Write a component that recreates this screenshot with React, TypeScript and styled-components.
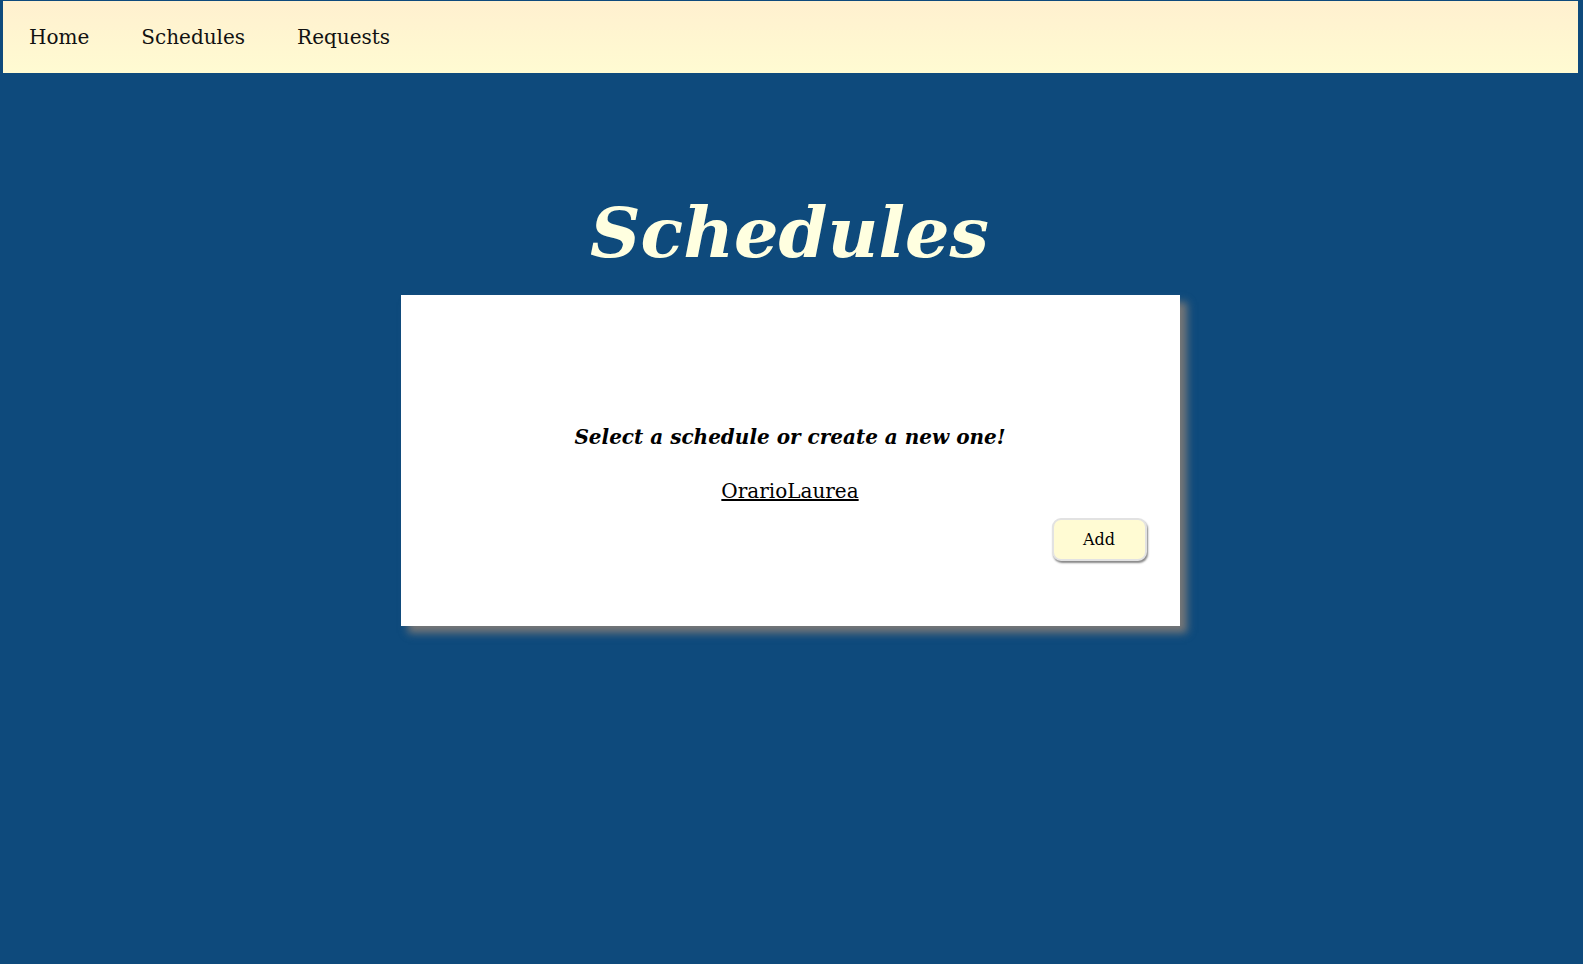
import styled, { createGlobalStyle } from "styled-components";

const GlobalStyle = createGlobalStyle`
  html, body {
    margin: 0;
    padding: 0;
    background-color: #0e4a7c;
    font-family: "DejaVu Serif", serif;
    min-height: 100%;
  }
`;

const StyledPage = styled.div`
  min-height: 964px;
  padding: 1px 5px 0 3px;
  box-sizing: border-box;
`;

const StyledNav = styled.nav`
  display: flex;
  align-items: center;
  height: 72px;
  background: linear-gradient(to bottom, #fff0cf, #fffbd2);

  a {
    padding: 0 26px;
    font-size: 20px;
    color: #111;
    text-decoration: none;
  }
`;

const StyledMain = styled.main`
  display: flex;
  flex-direction: column;
  align-items: center;
  padding-top: 118px;
`;

const StyledTitle = styled.h1`
  margin: 0 0 21px;
  font-size: 70px;
  font-style: italic;
  font-weight: bold;
  line-height: 83px;
  color: #ffffe0;
  margin-left: -2px;
`;

const StyledCard = styled.section`
  width: 779px;
  height: 331px;
  box-sizing: border-box;
  padding: 131px 33px 0;
  background-color: #fff;
  box-shadow: 7px 7px 8px #777;
  margin-left: -1px;
  display: flex;
  flex-direction: column;
  align-items: center;
`;

const StyledHint = styled.h3`
  margin: 0;
  font-size: 20px;
  font-style: italic;
  font-weight: bold;
  line-height: 23px;
  color: #000;
`;

const StyledList = styled.ul`
  list-style: none;
  margin: 31px 0 0;
  padding: 0;

  a {
    font-size: 20px;
    line-height: 23px;
    color: #000;
    text-decoration: underline;
  }
`;

const StyledActions = styled.div`
  align-self: stretch;
  display: flex;
  justify-content: flex-end;
  margin-top: 15px;

  button {
    width: 95px;
    height: 43px;
    font: inherit;
    font-size: 16px;
    color: #000;
    background-color: #fffbd3;
    border: 2px solid #e2e2e2;
    border-radius: 9px;
    box-shadow: 1px 2px 2px #888;
    cursor: pointer;
  }
`;

const App = () => {
  const schedules = ["OrarioLaurea"];

  return (
    <>
      <GlobalStyle />
      <StyledPage>
        <StyledNav>
          <a href="#">Home</a>
          <a href="#">Schedules</a>
          <a href="#">Requests</a>
        </StyledNav>
        <StyledMain>
          <StyledTitle>Schedules</StyledTitle>
          <StyledCard>
            <StyledHint>Select a schedule or create a new one!</StyledHint>
            <StyledList>
              {schedules.map((name) => (
                <li key={name}>
                  <a href="#">{name}</a>
                </li>
              ))}
            </StyledList>
            <StyledActions>
              <button>Add</button>
            </StyledActions>
          </StyledCard>
        </StyledMain>
      </StyledPage>
    </>
  );
};

export default App;
